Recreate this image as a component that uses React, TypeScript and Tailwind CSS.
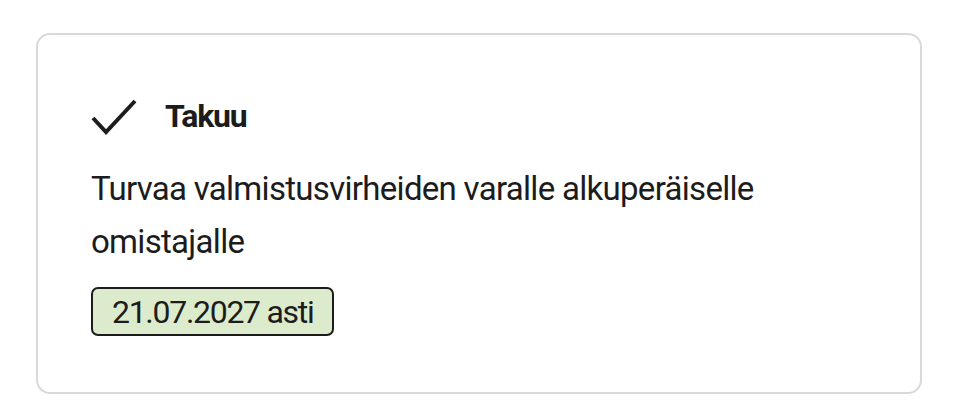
export default function App() {
  return (
    <div
      className="min-h-screen bg-white pl-[36px] pt-[33px] text-[#1c1c1c]"
      style={{ fontFamily: 'Roboto, "Liberation Sans", sans-serif' }}
    >
      <div className="h-[361px] w-[886px] rounded-[14px] border-2 border-[#d9d9d9] pl-[53px] pt-[61px]">
        <div className="flex h-[40px] items-center">
          <svg width="46" height="38" viewBox="0 0 46 38" fill="none" className="shrink-0">
            <polyline points="2,21 15,35 44,4" stroke="#1c1c1c" strokeWidth="4" strokeLinejoin="miter" />
          </svg>
          <h2 className="ml-[28px] text-[32px] font-bold leading-none tracking-[-1.2px]">Takuu</h2>
        </div>
        <p className="mt-[26px] max-w-[700px] text-[33px] leading-[53px] tracking-[-0.7px]">
          Turvaa valmistusvirheiden varalle alkuperäiselle omistajalle
        </p>
        <div className="mt-[19px] inline-flex h-[49px] items-center rounded-[7px] border-2 border-[#1c1c1c] bg-[#dcebcb] px-[19px] text-[32px] leading-none tracking-[-1.3px]">
          21.07.2027 asti
        </div>
      </div>
    </div>
  );
}
